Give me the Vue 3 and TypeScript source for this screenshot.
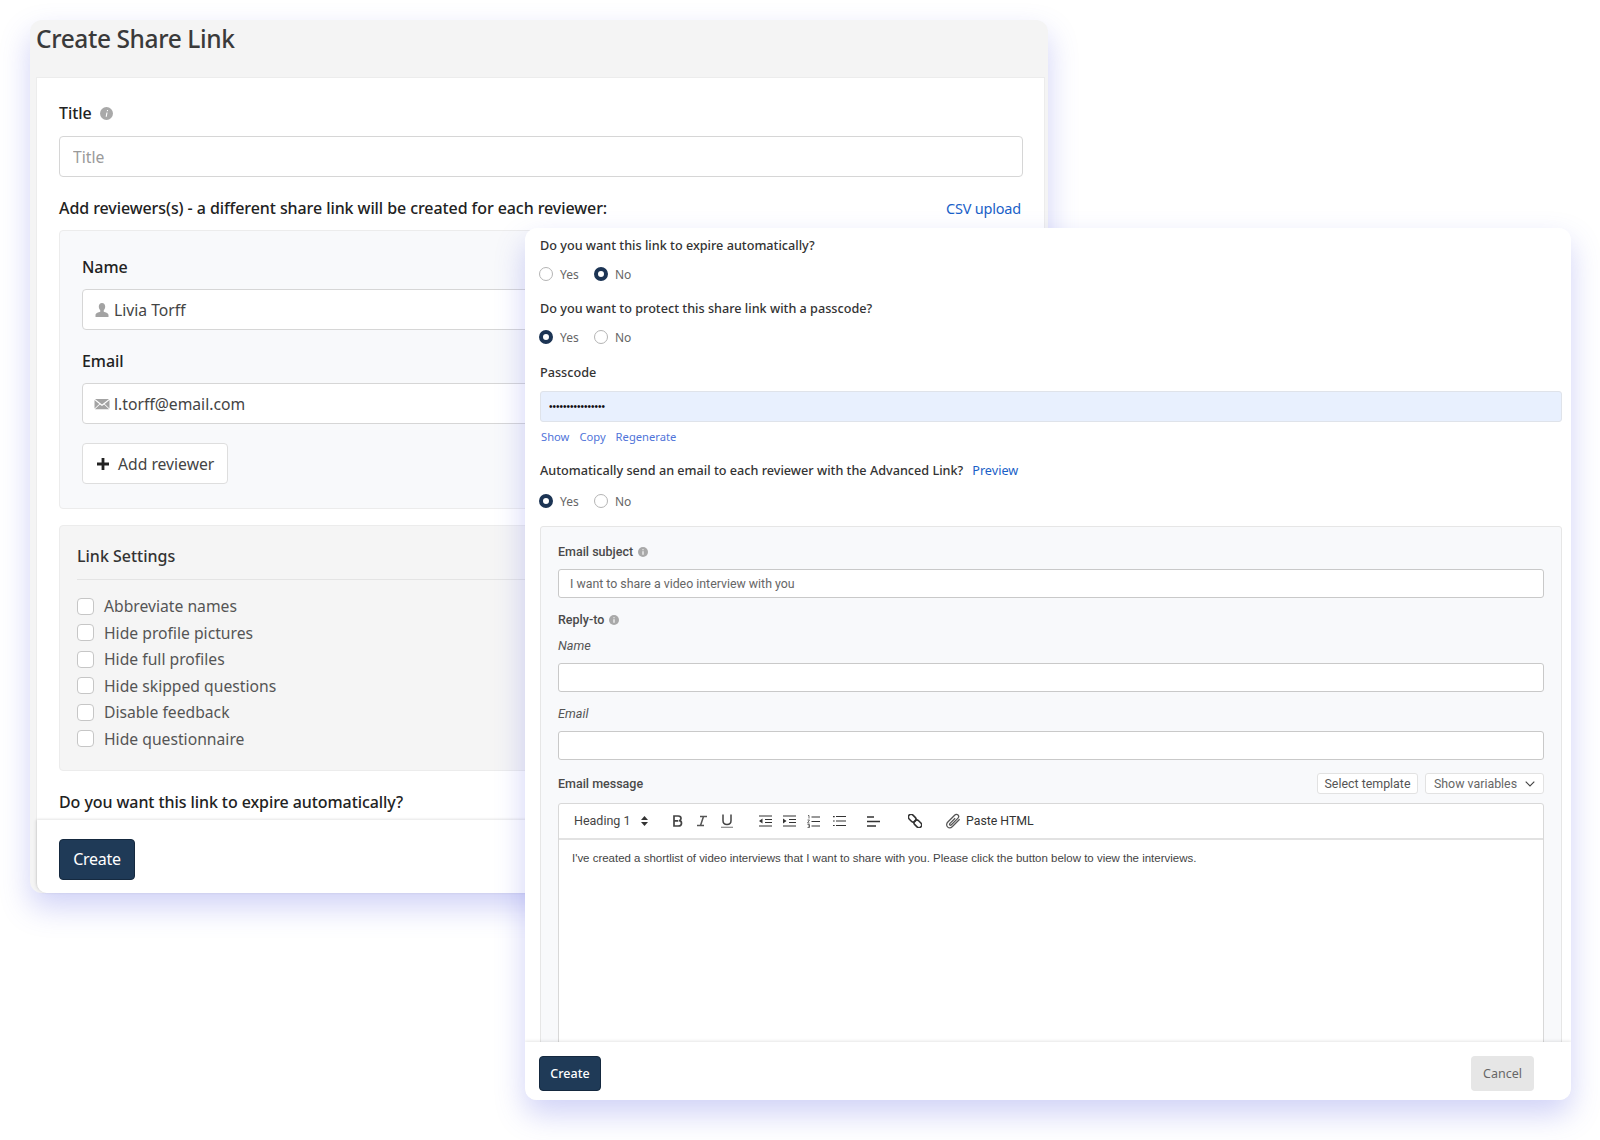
<script setup lang="ts">
const settings: string[] = ['Abbreviate names', 'Hide profile pictures', 'Hide full profiles', 'Hide skipped questions', 'Disable feedback', 'Hide questionnaire']
</script>

<template>
  <div class="canvas">
    <section class="win back">
      <h1 class="back-title">Create Share Link</h1>
      <div class="back-panel">
        <div class="back-body">
          <div class="lbl title-lbl">Title
            <svg class="info" width="13" height="13" viewBox="0 0 14 14"><circle cx="7" cy="7" r="7" fill="#a9a9a9"/><path d="M7.600 3.200h1.100l-.3 1.300H7.300zM6.900 5.800h1.200l-.8 4.800H6.100z" fill="#fff"/></svg>
          </div>
          <input class="inp big" placeholder="Title" />
          <div class="reviewer-head">
            <span class="lbl">Add reviewers(s) - a different share link will be created for each reviewer:</span>
            <a class="csv">CSV upload</a>
          </div>
          <div class="rev-box">
            <div class="lbl field-lbl">Name</div>
            <div class="inp big with-icon">
              <svg width="16" height="16" viewBox="0 0 16 16"><path d="M8 1c2 0 3.200 1.500 3.200 3.600 0 1.600-.7 3-1.500 3.800v1.100c0 .6 4.800 1 4.800 3.500V15H1.500v-2c0-2.500 4.800-2.900 4.800-3.500V8.400C5.500 7.600 4.800 6.200 4.800 4.600 4.800 2.500 6 1 8 1z" fill="#a3a3a3"/></svg>
              <span>Livia Torff</span>
            </div>
            <div class="lbl field-lbl second">Email</div>
            <div class="inp big with-icon">
              <svg width="16" height="16" viewBox="0 0 16 16"><path d="M1 3h14L8 8.500zM.5 4l4.800 3.900L.5 12.500zM15.500 4v8.500l-4.800-4.600zM5.900 8.500 8 10.100l2.100-1.600 5 4.800H.9z" fill="#a3a3a3"/></svg>
              <span>l.torff@email.com</span>
            </div>
            <button class="add-btn">
              <svg width="12" height="12" viewBox="0 0 12 12"><path d="M4.600 0h2.800v4.600H12v2.800H7.400V12H4.600V7.400H0V4.600h4.600z" fill="#222"/></svg>
              Add reviewer
            </button>
          </div>
          <div class="set-box">
            <div class="set-title">Link Settings</div>
            <ul class="set-list">
              <li v-for="s in settings" :key="s" class="set-row"><span class="check"></span>{{ s }}</li>
            </ul>
          </div>
          <div class="lbl expire-lbl">Do you want this link to expire automatically?</div>
        </div>
        <div class="back-foot"><button class="create big-create">Create</button></div>
      </div>
    </section>

    <section class="win front">
      <div class="front-body">
        <div class="q first-q">Do you want this link to expire automatically?</div>
        <div class="radios"><span class="radio"></span><span>Yes</span><span class="radio on"></span><span>No</span></div>
        <div class="q q2">Do you want to protect this share link with a passcode?</div>
        <div class="radios"><span class="radio on"></span><span>Yes</span><span class="radio"></span><span>No</span></div>
        <div class="q pass-lbl">Passcode</div>
        <input class="pass" value="••••••••••••••••" />
        <div class="pass-links"><a>Show</a><a>Copy</a><a>Regenerate</a></div>
        <div class="q auto-q">Automatically send an email to each reviewer with the Advanced Link?<a class="preview">Preview</a></div>
        <div class="radios"><span class="radio on"></span><span>Yes</span><span class="radio"></span><span>No</span></div>

        <div class="mail-box">
          <div class="m-lbl">Email subject
            <svg class="minfo" width="10" height="10" viewBox="0 0 14 14"><circle cx="7" cy="7" r="7" fill="#a9a9a9"/><path d="M6.200 3h1.600v1.700H6.200zM6.200 6h1.600v5H6.200z" fill="#fff"/></svg>
          </div>
          <input class="m-inp" value="I want to share a video interview with you" />
          <div class="m-lbl reply">Reply-to
            <svg class="minfo" width="10" height="10" viewBox="0 0 14 14"><circle cx="7" cy="7" r="7" fill="#a9a9a9"/><path d="M6.200 3h1.600v1.700H6.200zM6.200 6h1.600v5H6.200z" fill="#fff"/></svg>
          </div>
          <div class="m-sub">Name</div>
          <input class="m-inp" />
          <div class="m-sub sub2">Email</div>
          <input class="m-inp" />
          <div class="msg-head">
            <span class="m-lbl">Email message</span>
            <div class="msg-actions">
              <button class="mini">Select template</button>
              <button class="mini vars">Show variables
                <svg width="10" height="6" viewBox="0 0 10 6"><path d="M.7.7 5 5 9.300.7" fill="none" stroke="#444" stroke-width="1.100"/></svg>
              </button>
            </div>
          </div>
          <div class="editor">
            <div class="toolbar">
              <span class="heading">Heading 1</span>
              <svg class="t-updown" width="7" height="10" viewBox="0 0 7 10"><path d="M3.500 0 7 4H0zM3.500 10 0 6h7z" fill="#333"/></svg>
              <svg class="t-b" width="11" height="12" viewBox="0 0 11 12"><path d="M2 1h4.200c1.800 0 2.800.9 2.800 2.400 0 1.200-.7 2-1.800 2.300 1.400.2 2.300 1.100 2.300 2.500C9.500 10 8.300 11 6.300 11H2zM2 5.800h4.300" fill="none" stroke="#444" stroke-width="1.700"/></svg>
              <svg class="t-i" width="12" height="12" viewBox="0 0 12 12"><path d="M4 1.500h7M1 10.500h7M7.500 1.500l-3 9" fill="none" stroke="#555" stroke-width="1.500"/></svg>
              <svg class="t-u" width="12" height="14" viewBox="0 0 12 14"><path d="M2 .5v6.300c0 2.300 1.500 3.700 4 3.700s4-1.400 4-3.700V.5" fill="none" stroke="#444" stroke-width="1.500"/><path d="M0 13.300h12" stroke="#888" stroke-width="1.200"/></svg>
              <svg class="t-ic t-first" width="13" height="12" viewBox="0 0 13 12"><path d="M0 1h13M6 4.500h7M6 7.500h7M0 11h13" stroke="#333" stroke-width="1.200" fill="none"/><path d="M3.500 3.500v5L0 6z" fill="#333"/></svg>
              <svg class="t-ic" width="13" height="12" viewBox="0 0 13 12"><path d="M0 1h13M6 4.500h7M6 7.500h7M0 11h13" stroke="#333" stroke-width="1.200" fill="none"/><path d="M0 3.500v5L3.500 6z" fill="#333"/></svg>
              <svg class="t-ic t-ol" width="13" height="13" viewBox="0 0 13 13"><path d="M4.500 2h8.500M4.500 6.500h8.500M4.500 11h8.500" stroke="#333" stroke-width="1.200" fill="none"/><path d="M1 .5h1v3M.5 5h2L.5 8h2M.5 9.500h2v3h-2M1 11h1.500" stroke="#333" stroke-width=".7" fill="none"/></svg>
              <svg class="t-ic" width="13" height="12" viewBox="0 0 13 12"><path d="M3 1.500h10M3 6h10M3 10.500h10" stroke="#333" stroke-width="1.200" fill="none"/><path d="M0 1h1.700v1.200H0zM0 5.400h1.700v1.200H0zM0 9.900h1.700v1.200H0z" fill="#333"/></svg>
              <svg class="t-ic t-align" width="13" height="11" viewBox="0 0 13 11"><path d="M0 1h7M0 5.500h13M0 10h9" stroke="#333" stroke-width="1.500" fill="none"/></svg>
              <svg class="t-ic t-link" width="14" height="14" viewBox="0 0 14 14"><g fill="none" stroke="#333" stroke-width="1.600" transform="rotate(45 7 7)"><rect x="-1.300" y="4.300" width="8.600" height="5.400" rx="2.700"/><rect x="6.700" y="4.300" width="8.600" height="5.400" rx="2.700"/></g></svg>
              <svg class="t-clip" width="16" height="16" viewBox="0 0 14 14"><path d="M12.800 5.500 6.500 11.800c-1.400 1.400-3.200 1.400-4.300.3s-1-2.900.3-4.200L8.400 2c.9-.9 2.200-1 3-.2.800.8.700 2-.2 2.900L5.600 10.300c-.5.500-1 .5-1.400.2s-.3-.9.200-1.400l4.500-4.500" fill="none" stroke="#555" stroke-width="1.100"/></svg>
              <span class="paste">Paste HTML</span>
            </div>
            <div class="editor-text">I've created a shortlist of video interviews that I want to share with you. Please click the button below to view the interviews.</div>
          </div>
        </div>
      </div>
      <div class="front-foot">
        <button class="create small-create">Create</button>
        <button class="cancel">Cancel</button>
      </div>
    </section>
  </div>
</template>

<style scoped>
.canvas { position: relative; width: 1600px; height: 1140px; background: #fff; overflow: hidden; font-family: "Noto Sans", "Open Sans", sans-serif; color: #333; }
.win { position: absolute; box-sizing: border-box; display: flex; flex-direction: column; box-shadow: 0 14px 30px rgba(85, 95, 225, .28); }
.back { left: 30px; top: 20px; width: 1018px; height: 873px; background: #f4f4f4; border-radius: 12px; padding-left: 6px; }
.back-title { margin: 0; font-size: 24.500px; line-height: 38px; font-weight: 500; height: 57px; color: #3a3a3a; letter-spacing: -.4px; }
.back-panel { flex: 1; min-height: 0; margin-right: 3px; display: flex; flex-direction: column; background: #fff; border: 1px solid #ececec; border-bottom: 0; border-radius: 0 0 12px 10px; }
.back-body { flex: 1; min-height: 0; overflow: hidden; padding: 24px 21px 0 22px; }
.lbl { font-size: 16px; font-weight: 500; line-height: 22px; color: #222; letter-spacing: -.08px; white-space: nowrap; }
.title-lbl { display: flex; align-items: center; gap: 8px; margin-bottom: 12px; }
.inp { box-sizing: border-box; display: block; width: 100%; background: #fff; border: 1px solid #d6d6d6; border-radius: 4px; font-family: inherit; color: #444; outline: none; }
.inp.big { height: 41px; font-size: 15.700px; padding: 0 13px; }
.inp::placeholder { color: #9a9a9a; }
.with-icon { display: flex; align-items: center; gap: 4px; padding: 0 0 0 11px !important; }
.reviewer-head { display: flex; justify-content: space-between; align-items: center; margin-top: 20px; height: 22px; }
.csv { color: #1a5fc8; font-size: 14.500px; margin-right: 2px; letter-spacing: -.2px; }
.rev-box { box-sizing: border-box; margin-top: 11px; height: 279px; background: #f8f9fb; border: 1px solid #ececec; border-radius: 4px; padding: 25px 22px 0; }
.field-lbl { margin-bottom: 11px; }
.field-lbl.second { margin-top: 20px; }
.add-btn { box-sizing: border-box; display: flex; align-items: center; gap: 9px; margin-top: 19px; width: 146px; height: 41px; padding: 0 0 0 14px; background: #fff; border: 1px solid #dedede; border-radius: 4px; font: inherit; font-size: 15.700px; color: #444; }
.set-box { box-sizing: border-box; margin-top: 16px; height: 246px; background: #f5f5f5; border: 1px solid #ececec; border-radius: 4px; padding: 19px 17px 0; }
.set-title { font-size: 16px; font-weight: 500; line-height: 22px; color: #333; padding-bottom: 12px; border-bottom: 1px solid #e4e4e4; }
.set-list { list-style: none; margin: 13px 0 0; padding: 0; }
.set-row { display: flex; align-items: center; gap: 10px; height: 26.500px; font-size: 15.700px; color: #555; }
.check { box-sizing: border-box; width: 17px; height: 17px; background: #fff; border: 1px solid #c6c6c6; border-radius: 4px; }
.expire-lbl { margin-top: 20px; }
.back-foot { flex: none; height: 73px; box-sizing: border-box; padding: 19px 21px 0 22px; background: #fff; border-radius: 0 0 12px 10px; box-shadow: 0 -1px 3px rgba(0,0,0,.08), -2px 0 3px rgba(0,0,0,.06); position: relative; }
.create { background: #1f3a57; color: #fff; border: 1px solid #15293f; border-radius: 4px; font-family: inherit; padding: 0 0 1px; }
.big-create { width: 76px; height: 41px; font-size: 16px; letter-spacing: -.3px; }
.front { left: 525px; top: 228px; width: 1046px; height: 872px; background: #fff; border-radius: 12px; overflow: hidden; }
.front-body { flex: 1; min-height: 0; overflow: hidden; padding: 0 9px 0 14px; }
.q { font-size: 12.650px; font-weight: 500; line-height: 18px; color: #333; white-space: nowrap; padding-left: 1px; }
.first-q { margin-top: 8px; }
.q2 { margin-top: 15px; }
.radios { display: flex; align-items: center; height: 20px; margin-top: 10px; font-size: 12px; color: #666; }
.radios > span:nth-child(2) { margin-left: 7px; width: 34px; }
.radios > span:nth-child(4) { margin-left: 7px; }
.radio { box-sizing: border-box; width: 14px; height: 14px; border: 1px solid #b4b4b4; border-radius: 50%; background: #fff; flex: none; }
.radio.on { border: 4px solid #1c3454; }
.pass-lbl { margin-top: 16px; }
.pass { box-sizing: border-box; display: block; margin: 10px 0 0 1px; width: calc(100% - 1px); height: 31px; background: #e8f0fe; border: 1px solid #dfe3ea; border-radius: 3px; padding: 0 8px; font-family: "Liberation Sans", sans-serif; font-size: 10px; color: #111; outline: none; }
.pass-links { display: flex; gap: 10px; margin: 7px 0 0 2px; font-size: 11.200px; line-height: 16px; color: #4f74d9; }
.auto-q { margin-top: 16px; }
.preview { margin-left: 9px; color: #1a5fc8; font-weight: 400; }
.auto-q + .radios { margin-top: 12px; }
.mail-box { box-sizing: border-box; margin: 15px 0 0 1px; height: 540px; background: #f8f9fb; border: 1px solid #e6e6e6; border-radius: 3px; padding: 17px 17px 0; font-family: Roboto, "Liberation Sans", sans-serif; }
.m-lbl { display: flex; align-items: center; gap: 5px; font-size: 12.500px; font-weight: 500; line-height: 16px; color: #4a4a4a; }
.minfo { flex: none; }
.m-inp { box-sizing: border-box; display: block; width: 100%; height: 29px; margin-top: 9px; background: #fff; border: 1px solid #c9c9c9; border-radius: 3px; padding: 0 11px; font-family: inherit; font-size: 12.350px; color: #666; outline: none; }
.reply { margin-top: 14px; }
.m-sub { margin-top: 10px; font-size: 12.700px; font-style: italic; line-height: 16px; color: #555; }
.sub2 { margin-top: 14px; }
.m-sub + .m-inp { margin-top: 9px; }
.msg-head { display: flex; justify-content: space-between; align-items: center; margin-top: 13px; height: 21px; }
.msg-actions { display: flex; gap: 7px; }
.mini { box-sizing: border-box; height: 21px; padding: 0; background: #fff; border: 1px solid #e2e2e2; border-radius: 3px; font: inherit; font-size: 12.400px; color: #555; width: 101px; }
.vars { width: 119px; display: flex; align-items: center; justify-content: center; gap: 8px; color: #666; }
.editor { box-sizing: border-box; margin-top: 9px; height: 400px; background: #fff; border: 1px solid #d8d8d8; border-radius: 3px 3px 0 0; }
.toolbar { box-sizing: border-box; display: flex; align-items: center; height: 36px; border-bottom: 2px solid #e2e2e2; padding-left: 15px; color: #444; }
.heading { width: 67px; margin-top: -2px; font-size: 12.500px; }
.t-updown { flex: none; }
.t-b { margin-left: 24px; margin-right: 13px; }
.t-i { margin-right: 13px; }
.t-ic { margin-right: 11px; }
.t-first { margin-left: 26px; }
.t-ol { margin-right: 13px; }
.t-align { margin-left: 10px; margin-right: 28px; }
.t-link { margin-right: 23px; }
.t-clip { margin-right: 5px; }
.paste { font-size: 12.300px; color: #333; }
.editor-text { padding: 10px 13px; font-family: "Liberation Sans", Arial, sans-serif; font-size: 11.480px; line-height: 16px; color: #444; white-space: nowrap; }
.front-foot { flex: none; box-sizing: border-box; display: flex; justify-content: space-between; height: 58px; padding: 14px 37px 0 14px; background: #fff; box-shadow: 0 -1px 3px rgba(0,0,0,.1); position: relative; }
.small-create { width: 62px; height: 35px; font-size: 12.500px; font-weight: 500; }
.cancel { width: 63px; height: 35px; background: #e6e6e6; border: 0; border-radius: 4px; font-family: inherit; font-size: 12.500px; color: #666; padding: 0; }
</style>
